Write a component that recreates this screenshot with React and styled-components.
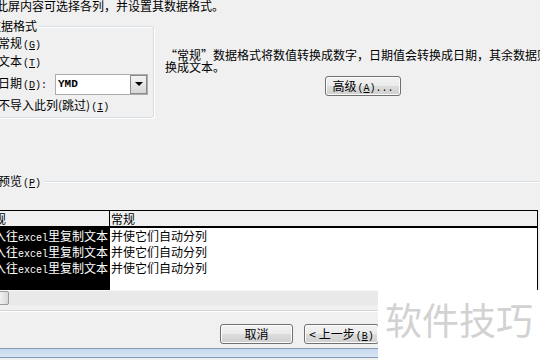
import React from "react";
import styled, { createGlobalStyle } from "styled-components";

const GlobalStyle = createGlobalStyle`
  html, body {
    margin: 0;
    padding: 0;
    background: #f0f0f0;
  }
  body {
    font-family: "Noto Sans CJK SC", "Liberation Sans", sans-serif;
    font-size: 12px;
    color: #000;
  }
`;

const Dialog = styled.div`
  position: relative;
  width: 540px;
  height: 360px;
  overflow: hidden;
  background: #f0f0f0;
  display: flex;
  flex-direction: column;
  line-height: 12px;
`;

const Intro = styled.div`
  height: 12px;
  margin-left: -4px;
  white-space: nowrap;
`;

const Hotkey = styled.span`
  font-family: "Liberation Mono", monospace;
  font-size: 10px;
  margin-left: 1px;
`;

const Ascii = styled.span`
  font-family: "Liberation Mono", monospace;
  font-size: 10px;
`;

const Quote = styled.span`
  display: inline-block;
  width: 12px;
  text-align: ${(p) => (p.$open ? "right" : "left")};
`;

const TopRow = styled.div`
  display: flex;
  margin-top: 8px;
`;

const GroupBox = styled.div`
  position: relative;
  flex: none;
  box-sizing: border-box;
  width: 184px;
  height: 92px;
  margin: 6px 0 0 -30px;
  padding: 8px 0 0 10px;
  border: 1px solid #d5dfe5;
  border-radius: 3px;
  box-shadow: inset 1px 1px 0 #fff, 1px 1px 0 #fff;
`;

const Legend = styled.div`
  position: absolute;
  top: -7px;
  left: 16px;
  padding: 0 2px;
  background: #f0f0f0;
  white-space: nowrap;
`;

const OptionRow = styled.div`
  display: flex;
  align-items: center;
  gap: 4px;
  height: ${(p) => p.$h || 18}px;
  white-space: nowrap;
`;

const Radio = styled.span`
  position: relative;
  flex: none;
  width: 13px;
  height: 13px;
  box-sizing: border-box;
  border: 1px solid #8e8f8f;
  border-radius: 50%;
  background: linear-gradient(135deg, #dcdcdc, #fbfbfb);
  &::after {
    content: "";
    display: ${(p) => (p.$checked ? "block" : "none")};
    position: absolute;
    inset: 3px;
    border-radius: 50%;
    background: #1a5fb4;
  }
`;

const FieldLabel = styled.span`
  flex: none;
  width: ${(p) => (p.$w ? `${p.$w}px` : "auto")};
`;

const Select = styled.div`
  flex: none;
  display: flex;
  align-items: center;
  box-sizing: border-box;
  width: 93px;
  height: 21px;
  margin-left: -4px;
  padding-left: 2px;
  border: 1px solid #abadb3;
  background: #fff;
  font-family: "Liberation Mono", monospace;
  font-size: 11px;
  font-weight: bold;
`;

const DropButton = styled.span`
  display: flex;
  align-items: center;
  justify-content: center;
  margin-left: auto;
  box-sizing: border-box;
  width: 17px;
  height: 19px;
  border: 1px solid #8a8a8a;
  background: linear-gradient(#f4f4f4, #d6d6d6);
  &::before {
    content: "";
    border-left: 4px solid transparent;
    border-right: 4px solid transparent;
    border-top: 4px solid #000;
  }
`;

const InfoPanel = styled.div`
  display: flex;
  flex-direction: column;
  margin-left: 11px;
  padding-top: 29px;
`;

const Description = styled.div`
  line-height: 12px;
  white-space: nowrap;
`;

const Button = styled.button`
  flex: none;
  box-sizing: border-box;
  width: ${(p) => p.$w}px;
  height: 20px;
  margin: 0;
  padding: 0;
  border: 1px solid #707070;
  border-radius: 3px;
  background: linear-gradient(#f2f2f2 0%, #ebebeb 50%, #dddddd 50%, #cfcfcf 100%);
  box-shadow: inset 0 0 0 1px #fcfcfc;
  font-family: inherit;
  font-size: 12px;
  line-height: 18px;
  color: #000;
  white-space: nowrap;
`;

const AdvancedButton = styled(Button)`
  margin: 3px 0 0 160px;
`;

const Separator = styled.div`
  display: flex;
  align-items: center;
  height: 12px;
  margin-top: 58px;
  white-space: nowrap;
`;

const SeparatorLabel = styled.span`
  margin-left: -26px;
`;

const Rule = styled.div`
  flex: 1;
  margin-left: 3px;
  border-top: 1px solid #d5dfe5;
  border-bottom: 1px solid #fff;
`;

const Preview = styled.div`
  box-sizing: border-box;
  width: 538px;
  margin-top: 22px;
  border-top: 1px solid #000;
  border-right: 1px solid #000;
  background: #fff;
`;

const HeaderRow = styled.div`
  display: flex;
  height: 15px;
  background: #f0f0f0;
  border-bottom: 2px solid #000;
`;

const HeadCell = styled.div`
  box-sizing: border-box;
  flex: ${(p) => (p.$w ? "none" : "1")};
  width: ${(p) => (p.$w ? `${p.$w}px` : "auto")};
  padding-left: 1px;
  border-right: ${(p) => (p.$w ? "1px solid #000" : "none")};
  line-height: 15px;
  text-indent: ${(p) => p.$indent || 0}px;
  overflow: hidden;
  white-space: nowrap;
`;

const Body = styled.div`
  display: flex;
  height: 62px;
`;

const DataColumn = styled.div`
  box-sizing: border-box;
  flex: ${(p) => (p.$w ? "none" : "1")};
  width: ${(p) => (p.$w ? `${p.$w}px` : "auto")};
  padding-left: 1px;
  border-right: ${(p) => (p.$w ? "1px solid #000" : "none")};
  background: ${(p) => (p.$selected ? "#000" : "#fff")};
  color: ${(p) => (p.$selected ? "#fff" : "#000")};
  text-indent: ${(p) => p.$indent || 0}px;
  overflow: hidden;
`;

const DataCell = styled.div`
  height: 16px;
  line-height: 16px;
  white-space: nowrap;
`;

const ScrollBar = styled.div`
  display: flex;
  height: 15px;
  background: #e9e9e9;
  border-top: 1px solid #f7f7f7;
  box-sizing: border-box;
`;

const ScrollButton = styled.div`
  box-sizing: border-box;
  width: 11px;
  margin-left: -2px;
  border: 1px solid #9a9a9a;
  border-radius: 2px;
  background: linear-gradient(90deg, #f4f4f4, #d9d9d9);
`;

const Etched = styled.div`
  margin-top: 5px;
  border-top: 1px solid #d5d5d5;
  border-bottom: 1px solid #fff;
`;

const Footer = styled.div`
  display: flex;
  justify-content: flex-end;
  gap: 11px;
  margin-top: 12px;
  padding-right: 161px;
`;

const StatusStripe = styled.div`
  box-sizing: border-box;
  height: 10px;
  margin-top: 4px;
  border-top: 1px solid #8e9bab;
  border-bottom: 1px solid #7e98b6;
  background: linear-gradient(#c4d8ee, #dae7f5);
`;

const Watermark = styled.div`
  position: absolute;
  left: 378px;
  top: 290px;
  right: 0;
  bottom: 0;
  padding: 11px 0 0 7px;
  background: #fff;
  color: #d2d2d2;
  font-size: 37px;
  line-height: 36px;
  white-space: nowrap;
`;

const options = [
  { label: "常规", key: "G", checked: true },
  { label: "文本", key: "T" },
];

const rows = [1, 2, 3];

export default function App() {
  return (
    <Dialog>
      <GlobalStyle />
      <Intro>此屏内容可选择各列，并设置其数据格式。</Intro>

      <TopRow>
        <GroupBox>
          <Legend>数据格式</Legend>
          {options.map((o) => (
            <OptionRow key={o.key}>
              <Radio $checked={o.checked} />
              <FieldLabel>
                {o.label}
                <Hotkey>
                  (<u>{o.key}</u>)
                </Hotkey>
              </FieldLabel>
            </OptionRow>
          ))}
          <OptionRow $h={26}>
            <Radio />
            <FieldLabel $w={57}>
              日期
              <Hotkey>
                (<u>D</u>):
              </Hotkey>
            </FieldLabel>
            <Select>
              YMD
              <DropButton />
            </Select>
          </OptionRow>
          <OptionRow>
            <Radio />
            <FieldLabel>
              不导入此列(跳过)
              <Hotkey>
                (<u>I</u>)
              </Hotkey>
            </FieldLabel>
          </OptionRow>
        </GroupBox>

        <InfoPanel>
          <Description>
            <Quote $open>“</Quote>常规<Quote>”</Quote>
            数据格式将数值转换成数字，日期值会转换成日期，其余数据则转
            <br />
            换成文本。
          </Description>
          <AdvancedButton $w={76}>
            高级<Hotkey>(<u>A</u>)...</Hotkey>
          </AdvancedButton>
        </InfoPanel>
      </TopRow>

      <Separator>
        <SeparatorLabel>
          数据预览
          <Hotkey>
            (<u>P</u>)
          </Hotkey>
        </SeparatorLabel>
        <Rule />
      </Separator>

      <Preview>
        <HeaderRow>
          <HeadCell $w={110} $indent={-19}>
            常规
          </HeadCell>
          <HeadCell>常规</HeadCell>
        </HeaderRow>
        <Body>
          <DataColumn $w={110} $selected $indent={-7}>
            {rows.map((r) => (
              <DataCell key={r}>
                入往<Ascii>excel</Ascii>里复制文本
              </DataCell>
            ))}
          </DataColumn>
          <DataColumn>
            {rows.map((r) => (
              <DataCell key={r}>并使它们自动分列</DataCell>
            ))}
          </DataColumn>
        </Body>
      </Preview>

      <ScrollBar>
        <ScrollButton />
      </ScrollBar>
      <Etched />

      <Footer>
        <Button $w={73}>取消</Button>
        <Button $w={75}>
          &lt; 上一步<Hotkey>(<u>B</u>)</Hotkey>
        </Button>
      </Footer>

      <StatusStripe />
      <Watermark>软件技巧</Watermark>
    </Dialog>
  );
}
